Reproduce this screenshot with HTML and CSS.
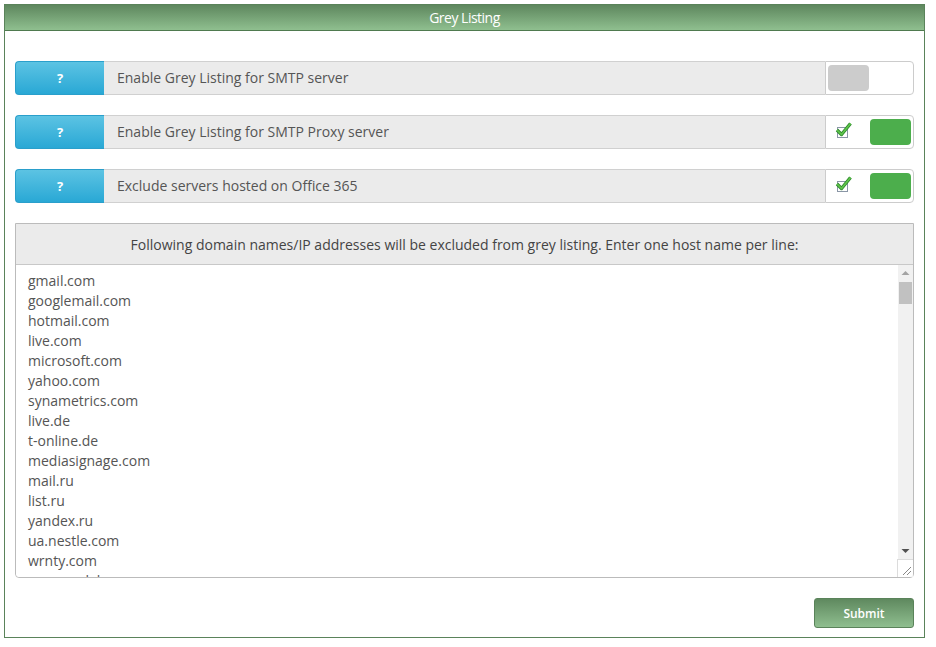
FILE: index.html
```html
<!DOCTYPE html>
<html>
<head>
<meta charset="utf-8">
<link rel="stylesheet" href="styles.css">
</head>
<body>
<div class="panel">
  <div class="panel-head">Grey Listing</div>
  <div class="panel-body">
    <div class="row">
      <div class="help">?</div>
      <div class="label">Enable Grey Listing for SMTP server</div>
      <div class="ctrl">
        <div class="knob off"></div>
      </div>
    </div>
    <div class="row">
      <div class="help">?</div>
      <div class="label">Enable Grey Listing for SMTP Proxy server</div>
      <div class="ctrl on">
        <svg class="check" width="18" height="18" viewBox="0 0 18 18">
          <rect x="2.5" y="6.5" width="10" height="10" fill="#fff" stroke="#8a96a6" stroke-width="1"/>
          <path d="M2 9 L6.5 13.5 L15.5 2.5" fill="none" stroke="#2e8b2e" stroke-width="3.4" stroke-linejoin="round"/>
          <path d="M2 9 L6.5 13.5 L15.5 2.5" fill="none" stroke="#5fc44a" stroke-width="1.7" stroke-linejoin="round"/>
        </svg>
        <div class="knob green"></div>
      </div>
    </div>
    <div class="row">
      <div class="help">?</div>
      <div class="label">Exclude servers hosted on Office 365</div>
      <div class="ctrl on">
        <svg class="check" width="18" height="18" viewBox="0 0 18 18">
          <rect x="2.5" y="6.5" width="10" height="10" fill="#fff" stroke="#8a96a6" stroke-width="1"/>
          <path d="M2 9 L6.5 13.5 L15.5 2.5" fill="none" stroke="#2e8b2e" stroke-width="3.4" stroke-linejoin="round"/>
          <path d="M2 9 L6.5 13.5 L15.5 2.5" fill="none" stroke="#5fc44a" stroke-width="1.7" stroke-linejoin="round"/>
        </svg>
        <div class="knob green"></div>
      </div>
    </div>
    <div class="list-box">
      <div class="list-head">Following domain names/IP addresses will be excluded from grey listing. Enter one host name per line:</div>
      <div class="list-wrap">
        <textarea class="list" spellcheck="false">gmail.com
googlemail.com
hotmail.com
live.com
microsoft.com
yahoo.com
synametrics.com
live.de
t-online.de
mediasignage.com
mail.ru
list.ru
yandex.ru
ua.nestle.com
wrnty.com
messagelabs.com
outlook.com
aol.com
icloud.com
gmx.de
web.de
me.com
msn.com
hotmail.de
hotmail.co.uk
yahoo.de
yahoo.co.uk
amazon.com
amazonses.com
google.com</textarea>
        <div class="scrollbar">
          <div class="sb-btn">
            <svg width="15" height="17" viewBox="0 0 15 17"><path d="M3.5 10 L7.5 6 L11.5 10 Z" fill="#a3a3a3"/></svg>
          </div>
          <div class="sb-thumb"></div>
          <div class="sb-track"></div>
          <div class="sb-btn">
            <svg width="15" height="17" viewBox="0 0 15 17"><path d="M3.5 7 L7.5 11 L11.5 7 Z" fill="#505050"/></svg>
          </div>
          <div class="sb-corner">
            <svg width="15" height="17" viewBox="0 0 15 17"><path d="M13 7 L5 15 M13 11 L9 15" stroke="#888" stroke-width="1"/></svg>
          </div>
        </div>
      </div>
    </div>
    <div class="actions">
      <button class="submit">Submit</button>
    </div>
  </div>
</div>
</body>
</html>
```

FILE: styles.css
```css
html, body {
  margin: 0;
  padding: 0;
  background: #fff;
  font-family: "Open Sans", "DejaVu Sans", sans-serif;
}
.panel {
  margin: 4px 0 0 4px;
  width: 919px;
  height: 632px;
  border: 1px solid #5a835a;
  display: flex;
  flex-direction: column;
}
.panel-head {
  height: 25px;
  line-height: 25px;
  background: linear-gradient(to bottom, #5e875e, #8fbf8f);
  border-bottom: 1px solid #4f7a4f;
  color: #fff;
  text-align: center;
  font-size: 14px;
  letter-spacing: -0.5px;
}
.panel-body {
  padding: 30px 10px 0 10px;
  display: flex;
  flex-direction: column;
}
.row {
  display: flex;
  height: 34px;
  margin-bottom: 20px;
}
.help {
  flex: none;
  box-sizing: border-box;
  width: 89px;
  border: 1px solid #2a9fcb;
  border-right: none;
  border-radius: 4px 0 0 4px;
  background: linear-gradient(to bottom, #5cc3e3, #29a8d5);
  color: #fff;
  font-weight: bold;
  font-size: 13px;
  display: flex;
  align-items: center;
  justify-content: center;
}
.label {
  flex: 1;
  background: #ebebeb;
  border-top: 1px solid #d0d0d0;
  border-bottom: 1px solid #d0d0d0;
  color: #555;
  font-size: 14px;
  padding: 0 0 2px 13px;
  display: flex;
  align-items: center;
}
.ctrl {
  width: 89px;
  flex: none;
  box-sizing: border-box;
  border: 1px solid #ccc;
  border-radius: 0 4px 4px 0;
  background: #fff;
  display: flex;
  align-items: center;
  padding: 0 2px 0 2px;
}
.ctrl.on {
  justify-content: space-between;
  padding-left: 9px;
}
.check {
  margin-top: -4px;
}
.knob {
  width: 41px;
  height: 26px;
  border-radius: 4px;
}
.knob.off {
  background: #cccccc;
}
.knob.green {
  background: #4cae4c;
}
.list-box {
  border: 1px solid #bbb;
  border-radius: 0 0 4px 4px;
  display: flex;
  flex-direction: column;
}
.list-head {
  height: 40px;
  background: #ebebeb;
  border-bottom: 1px solid #c8c8c8;
  color: #444;
  font-size: 14px;
  display: flex;
  align-items: center;
  justify-content: center;
}
.list-wrap {
  position: relative;
  height: 312px;
}
.list {
  display: block;
  height: 312px;
  width: 100%;
  box-sizing: border-box;
  margin: 0;
  border: none;
  outline: none;
  padding: 6px 28px 0 12px;
  font-family: "Open Sans", "DejaVu Sans", sans-serif;
  font-size: 14px;
  line-height: 20px;
  color: #555;
  background: #fff;
  border-radius: 0 0 4px 4px;
  resize: none;
  overflow: hidden;
}
.scrollbar {
  position: absolute;
  top: 0;
  right: 0;
  width: 15px;
  height: 312px;
  display: flex;
  flex-direction: column;
  background: #f1f1f1;
}
.sb-btn {
  height: 17px;
  flex: none;
}
.sb-btn svg, .sb-corner svg {
  display: block;
}
.sb-thumb {
  height: 22px;
  margin: 0 1px;
  background: #c1c1c1;
  flex: none;
}
.sb-track {
  flex: 1;
}
.sb-corner {
  height: 17px;
  flex: none;
  background: #fff;
  border-left: 1px solid #dcdcdc;
  border-top: 1px solid #dcdcdc;
  margin-left: -1px;
  border-radius: 0 0 4px 0;
}
.actions {
  display: flex;
  justify-content: flex-end;
  padding-top: 20px;
}
.submit {
  width: 100px;
  height: 30px;
  border: 1px solid #5a835a;
  border-radius: 3px;
  background: linear-gradient(to bottom, #5f895f, #8fbe8f);
  color: #fff;
  font-family: "Open Sans", "DejaVu Sans", sans-serif;
  font-size: 12px;
  font-weight: 600;
  cursor: pointer;
}
```
